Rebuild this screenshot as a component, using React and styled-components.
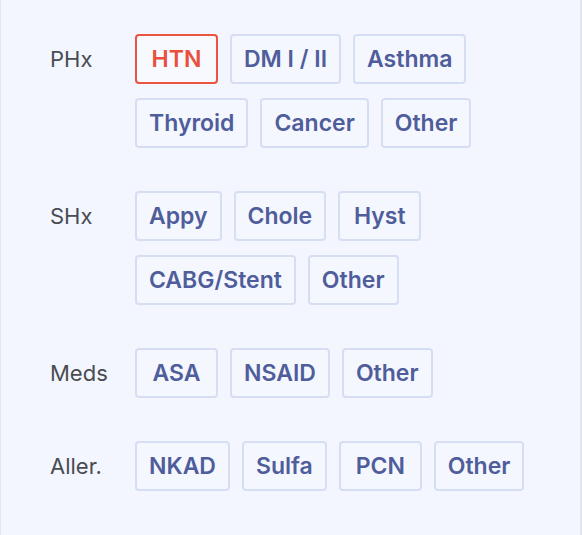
import React, { useState } from "react";
import styled, { createGlobalStyle } from "styled-components";

const GlobalStyle = createGlobalStyle`
    body {
        margin: 0;
        background: #f3f6fe;
        font-family: Inter, "Noto Sans", sans-serif;
    }
`;

const Panel = styled.div`
    box-sizing: border-box;
    width: 582px;
    height: 535px;
    background: #f3f6fe;
    border-left: 1px solid #e3e6ee;
    border-right: 2px solid #e3e6ee;
    padding: 34px 0 0 49px;
    display: flex;
    flex-direction: column;
    gap: 43px;
`;

const Section = styled.div`
    display: grid;
    grid-template-columns: 85px 1fr;
    align-items: start;
`;

const Label = styled.div`
    height: 50px;
    display: flex;
    align-items: center;
    font-size: 22px;
    color: #4a4c50;
    font-weight: 400;
`;

const Options = styled.div`
    display: flex;
    flex-wrap: wrap;
    column-gap: 12px;
    row-gap: 14px;
    width: 390px;
`;

const Chip = styled.button`
    box-sizing: border-box;
    height: 50px;
    min-width: 83px;
    padding: 0 12px;
    border-radius: 4px;
    border: 2px solid ${(p) => (p.$active ? "#ea5440" : "#d6def4")};
    background: ${(p) => (p.$active ? "#f8f9fe" : "#f5f7fe")};
    color: ${(p) => (p.$active ? "#e9503b" : "#4f5d9b")};
    font-family: Inter, "Noto Sans", sans-serif;
    font-size: 23px;
    font-weight: 600;
    text-align: center;
    cursor: pointer;
`;

const groups = [
    { label: "PHx", items: ["HTN", "DM I / II", "Asthma", "Thyroid", "Cancer", "Other"] },
    { label: "SHx", items: ["Appy", "Chole", "Hyst", "CABG/Stent", "Other"] },
    { label: "Meds", items: ["ASA", "NSAID", "Other"] },
    { label: "Aller.", items: ["NKAD", "Sulfa", "PCN", "Other"] },
];

export default function App() {
    const [selected, setSelected] = useState({ "PHx-HTN": true });
    const toggle = (key) => setSelected((s) => ({ ...s, [key]: !s[key] }));

    return <>
        <GlobalStyle />
        <Panel>
            {groups.map((g) => (
                <Section key={g.label}>
                    <Label>{g.label}</Label>
                    <Options>
                        {g.items.map((it) => {
                            const key = g.label + "-" + it;
                            return <Chip key={key} $active={selected[key]} onClick={() => toggle(key)}>{it}</Chip>
                        })}
                    </Options>
                </Section>
            ))}
        </Panel>
    </>
}
